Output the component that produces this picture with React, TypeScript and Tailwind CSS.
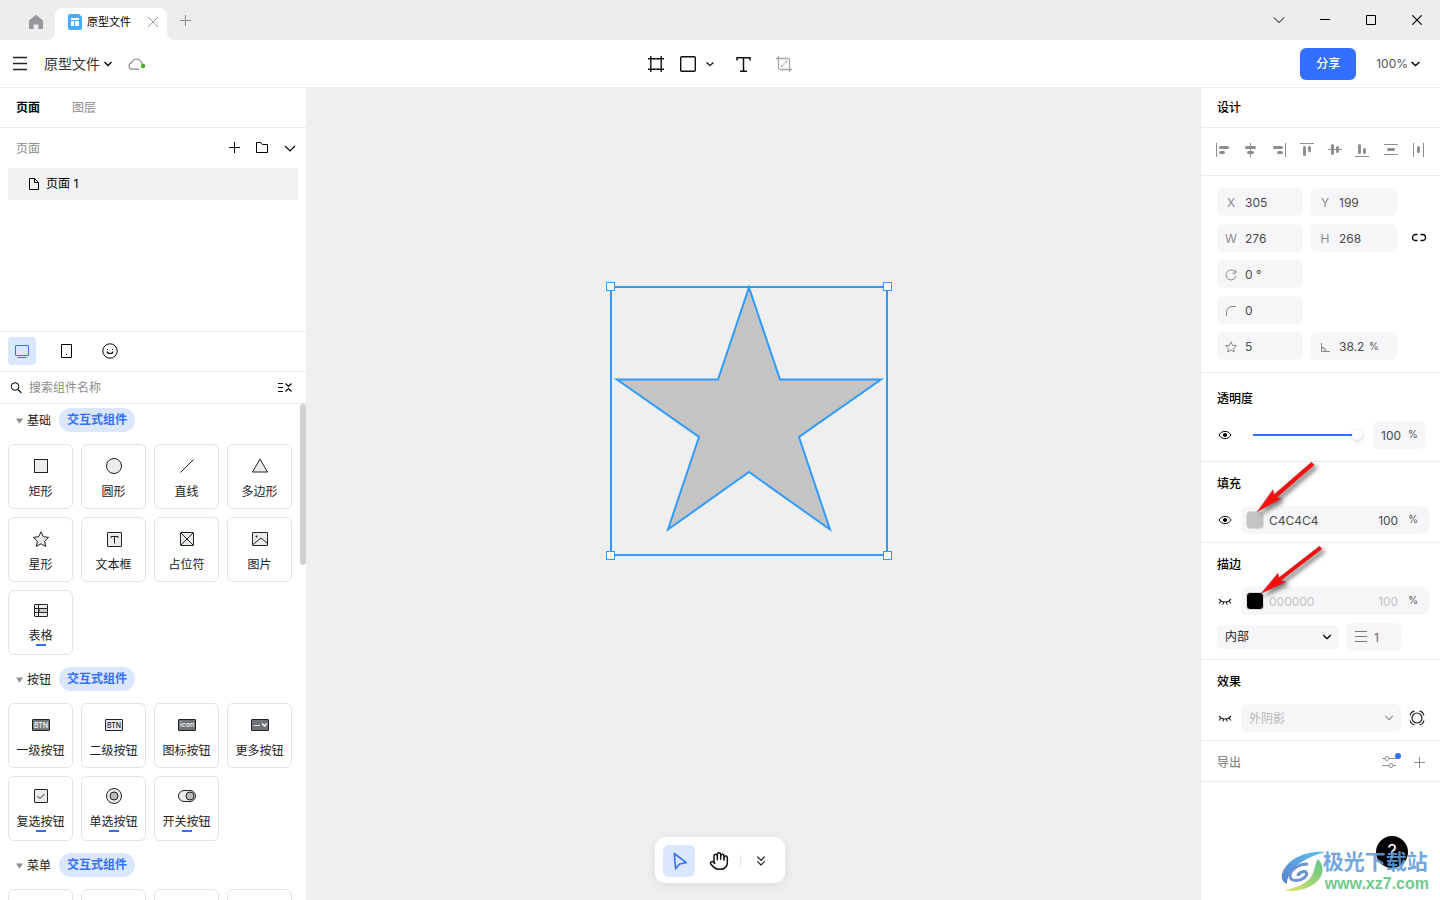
import type { ReactNode } from "react";
import { ChevronDown, ChevronsDown, Hand } from "lucide-react";

interface IconProps {
  w?: number;
  h?: number;
  className?: string;
  children: ReactNode;
}

const Icon = ({ w = 16, h = 16, className = "", children }: IconProps) => (
  <svg
    width={w}
    height={h}
    viewBox={`0 0 ${w} ${h}`}
    fill="none"
    stroke="currentColor"
    className={`shrink-0 ${className}`}
    aria-hidden="true"
  >
    {children}
  </svg>
);

/* ---------- title bar ---------- */

const TitleBar = () => (
  <header className="flex h-10 shrink-0 items-end justify-between bg-[#ecedef]">
    <div className="flex items-end">
      <button aria-label="首页" className="flex h-9 w-[55px] items-center justify-end pr-[11px] text-[#96989b]">
        <Icon>
          <path d="M8 .8 1 6.4V15h4.6v-4.6h4.8V15H15V6.4z" fill="currentColor" stroke="none" />
        </Icon>
      </button>
      <div className="relative flex h-8 w-28 items-center rounded-t-lg bg-white pr-2 pl-3">
        <svg width="8" height="8" className="absolute bottom-0 -left-2 fill-white" aria-hidden="true">
          <path d="M8 0v8H0a8 8 0 0 0 8-8z" />
        </svg>
        <svg width="8" height="8" className="absolute -right-2 bottom-0 fill-white" aria-hidden="true">
          <path d="M0 0v8h8a8 8 0 0 1-8-8z" />
        </svg>
        <svg width="16" height="16" viewBox="0 0 16 16" className="mb-1 shrink-0" aria-hidden="true">
          <path d="M3 0h9l3 3v11a2 2 0 0 1-2 2H3a2 2 0 0 1-2-2V2a2 2 0 0 1 2-2z" fill="#45aeff" />
          <path d="M4 4h8v2H4zM4 7h3v5H4zM8 7h4v5H8z" fill="#fff" />
        </svg>
        <span className="mb-1 ml-1 text-[11px] text-black">原型文件</span>
        <button aria-label="关闭标签" className="mb-1 ml-auto text-[#9a9a9a]">
          <Icon w={12} h={12}>
            <path d="m1 1 10 10M11 1 1 11" />
          </Icon>
        </button>
      </div>
      <button aria-label="新建标签" className="flex h-9 items-center pb-1 pl-3 text-[#8c8c8c]">
        <Icon w={12} h={12}>
          <path d="M6.500 1v11M1 6.500h11" />
        </Icon>
      </button>
    </div>
    <div className="flex h-full text-black">
      <button aria-label="更多" className="flex w-[46px] items-center justify-center">
        <Icon w={12} h={12}>
          <path d="m.8 3.500 5.200 5 5.200-5" />
        </Icon>
      </button>
      <button aria-label="最小化" className="flex w-[46px] items-center justify-center">
        <Icon w={10} h={10}>
          <path d="M0 4.500h10" />
        </Icon>
      </button>
      <button aria-label="最大化" className="flex w-[46px] items-center justify-center">
        <Icon w={10} h={10}>
          <path d="M.5.5h9v9h-9z" />
        </Icon>
      </button>
      <button aria-label="关闭" className="flex w-[46px] items-center justify-center">
        <Icon w={10} h={10}>
          <path d="m.3.3 9.400 9.400M9.700.3.3 9.700" strokeWidth="1.200" />
        </Icon>
      </button>
    </div>
  </header>
);

/* ---------- toolbar ---------- */

const Toolbar = () => (
  <div className="grid h-12 shrink-0 grid-cols-[1fr_auto_1fr] items-center border-b border-[#ededed] bg-white">
    <div className="flex items-center pl-3">
      <button aria-label="菜单" className="text-[#222]">
        <Icon>
          <path d="M1 1.500h14M1 7.500h14M1 13.500h14" strokeWidth="1.400" />
        </Icon>
      </button>
      <button className="ml-4 flex items-center gap-1 text-sm text-[#333]">
        原型文件
        <Icon w={8} h={8} className="text-black">
          <path d="m.5 2 3.500 3.500L7.500 2" strokeWidth="1.300" />
        </Icon>
      </button>
      <button aria-label="已同步" className="ml-4">
        <Icon w={18} h={14} className="text-[#9c9c9c]">
          <path
            d="M11 12.300H4.200A3.400 3.400 0 0 1 3.700 5.600 5.200 5.200 0 0 1 13.500 5.600L14.500 7"
            strokeWidth="1.400"
          />
          <circle cx="15" cy="9" r="2.200" fill="#3fb215" stroke="none" />
        </Icon>
      </button>
    </div>
    <div className="flex w-36 items-center text-[#111]">
      <button aria-label="画板">
        <Icon>
          <path d="M2.800 0v16M13.200 0v16M0 2.800h16M0 13.200h16" strokeWidth="1.400" />
        </Icon>
      </button>
      <button aria-label="矩形" className="ml-4 flex items-center gap-[9px]">
        <Icon>
          <rect x=".7" y=".7" width="14.600" height="14.600" rx="1" strokeWidth="1.400" />
        </Icon>
        <Icon w={10} h={8}>
          <path d="m1.500 2.500 3.500 3 3.500-3" strokeWidth="1.300" />
        </Icon>
      </button>
      <button aria-label="文本" className="ml-5">
        <Icon>
          <path d="M2 4.500V1.700h13v2.800M8.500 1.700v13.500M5 15.200h7" strokeWidth="1.500" />
        </Icon>
      </button>
      <button aria-label="裁剪" className="ml-auto text-[#a6a6a6]">
        <Icon>
          <path d="M2.500 0v12a1.500 1.500 0 0 0 1.500 1.500h12M0 2.500h12A1.500 1.500 0 0 1 13.500 4v12" strokeWidth="1.300" />
          <path d="m5 11 2-2M7.500 8.500l1-1M9 7l2-2" strokeWidth="1.300" />
        </Icon>
      </button>
    </div>
    <div className="flex items-center justify-end gap-5 pr-5">
      <button className="h-8 w-14 rounded-md bg-[#3370ff] text-xs font-medium text-white">分享</button>
      <button className="flex items-center gap-[3px] text-xs text-[#555]">
        100%
        <Icon w={9} h={8} className="text-black">
          <path d="m.5 2 4 3.500 4-3.500" strokeWidth="1.400" />
        </Icon>
      </button>
    </div>
  </div>
);

/* ---------- component library ---------- */

interface Widget {
  name: string;
  icon: ReactNode;
  isNew?: boolean;
}

interface WidgetGroup {
  title: string;
  items: Widget[];
}

const BTN_TEXT = "stroke-none text-[7px] font-medium";

const groups: WidgetGroup[] = [
  {
    title: "基础",
    items: [
      { name: "矩形", icon: <rect x="2.500" y="1.500" width="13" height="13" fill="#ececec" /> },
      { name: "圆形", icon: <circle cx="9" cy="8" r="7.500" fill="#ececec" /> },
      { name: "直线", icon: <path d="M2.500 14.500 15.500 1.500" /> },
      { name: "多边形", icon: <path d="M9 1 16.500 14h-15z" fill="#ececec" /> },
      {
        name: "星形",
        icon: <path d="m9 .8 2.300 4.900 5.300.7-3.900 3.700 1 5.300L9 12.800l-4.700 2.600 1-5.300L1.400 6.400l5.300-.7z" fill="#ececec" />,
      },
      {
        name: "文本框",
        icon: (
          <>
            <rect x="2.500" y="1.500" width="14" height="14" rx=".5" fill="#ececec" />
            <path d="M6 7V5.500h7V7M9.500 5.500v7" />
          </>
        ),
      },
      {
        name: "占位符",
        icon: (
          <>
            <rect x="2.500" y="1.500" width="13" height="13" rx=".5" fill="#ececec" />
            <path d="m3 2 12 12M15 2 3 14" />
          </>
        ),
      },
      {
        name: "图片",
        icon: (
          <>
            <rect x="1.500" y="1.500" width="15" height="13" rx=".5" fill="#ececec" />
            <path d="m2 13.500 8-6.500 6.500 5.500" />
            <circle cx="5.500" cy="5.500" r="1" fill="currentColor" stroke="none" />
          </>
        ),
      },
      {
        name: "表格",
        isNew: true,
        icon: (
          <>
            <rect x="2.500" y="2.500" width="13" height="12" rx=".5" fill="#ececec" />
            <path d="M7 6.500h8.500v4H7z" fill="#ccc" />
            <path d="M2.500 6.500h13M2.500 10.500h13M6.500 2.500v12" />
          </>
        ),
      },
    ],
  },
  {
    title: "按钮",
    items: [
      {
        name: "一级按钮",
        icon: (
          <>
            <rect x=".5" y="2.500" width="17" height="11" rx=".5" fill="#777" />
            <text x="9" y="11" textAnchor="middle" className={`fill-white ${BTN_TEXT}`}>BTN</text>
          </>
        ),
      },
      {
        name: "二级按钮",
        icon: (
          <>
            <rect x=".5" y="2.500" width="17" height="11" rx=".5" fill="#ececec" />
            <text x="9" y="11" textAnchor="middle" className={`fill-[#222] ${BTN_TEXT}`}>BTN</text>
          </>
        ),
      },
      {
        name: "图标按钮",
        icon: (
          <>
            <rect x=".5" y="2.500" width="17" height="11" rx=".5" fill="#6f7378" />
            <text x="9" y="10" textAnchor="middle" className={`fill-white ${BTN_TEXT}`}>icon</text>
          </>
        ),
      },
      {
        name: "更多按钮",
        icon: (
          <>
            <rect x=".5" y="2.500" width="17" height="11" rx=".5" fill="#6f7378" />
            <path d="M2.500 8.500H9" stroke="#ddd" />
            <path d="m11 6.500 2.500 2.500L16 6.500" stroke="#fff" strokeWidth="1.300" />
          </>
        ),
      },
      {
        name: "复选按钮",
        isNew: true,
        icon: (
          <>
            <rect x="2.500" y="1.500" width="13" height="13" rx=".5" fill="#ececec" />
            <path d="m5.500 8 2.500 2.500 4.500-4.500" />
          </>
        ),
      },
      {
        name: "单选按钮",
        isNew: true,
        icon: (
          <>
            <circle cx="9" cy="8" r="7.500" fill="#ececec" />
            <circle cx="9" cy="8" r="4" fill="#bbb" />
          </>
        ),
      },
      {
        name: "开关按钮",
        isNew: true,
        icon: (
          <>
            <rect x=".5" y="2.500" width="17" height="11" rx="5.500" fill="#ececec" />
            <circle cx="12" cy="8" r="4" fill="#bbb" />
          </>
        ),
      },
    ],
  },
  {
    title: "菜单",
    items: [
      { name: "", icon: null },
      { name: "", icon: null },
      { name: "", icon: null },
      { name: "", icon: null },
    ],
  },
];

const WidgetCard = ({ widget }: { widget: Widget }) => (
  <button
    className={`flex h-[65px] flex-col items-center rounded-md border border-[#e3e3e3] bg-white text-xs whitespace-nowrap text-[#222] ${
      widget.isNew ? "pt-[11px]" : "pt-[13px]"
    }`}
  >
    <Icon w={18}>{widget.icon}</Icon>
    <span className="mt-[10px] leading-4">{widget.name}</span>
    {widget.isNew && <span className="h-[2px] w-[10px] bg-[#3370ff]" />}
  </button>
);

const LeftPanel = () => (
  <aside className="flex w-[306px] shrink-0 flex-col bg-white text-xs">
    <div className="flex h-10 shrink-0 items-center gap-8 border-b border-[#ebebeb] px-4">
      <button className="font-bold text-black">页面</button>
      <button className="text-[#8c8c8c]">图层</button>
    </div>
    <div className="flex h-10 shrink-0 items-center justify-between pr-2 pl-4">
      <span className="pt-px text-[#8c8c8c]">页面</span>
      <div className="flex items-center gap-3 text-black">
        <button aria-label="新建页面">
          <Icon>
            <path d="M8.500 2v11M3 7.500h11" />
          </Icon>
        </button>
        <button aria-label="新建文件夹">
          <Icon>
            <path d="M2.500 2.500v10h11v-8h-5l-1.500-2H2.500z" />
          </Icon>
        </button>
        <button aria-label="收起">
          <Icon>
            <path d="m3 6 5 5 5-5" strokeWidth="1.200" />
          </Icon>
        </button>
      </div>
    </div>
    <div className="h-[163px] shrink-0 px-2">
      <button className="flex h-8 w-full items-center gap-1 bg-[#f2f2f2] pl-[18px] text-black">
        <Icon>
          <path d="M3.500 2.500h5l4 4v7h-9zM8.500 2.500v4h4" />
        </Icon>
        页面 1
      </button>
    </div>
    <div className="flex h-[41px] shrink-0 items-start gap-4 border-y border-[#ebebeb] px-2 pt-[5px] text-black">
      <button aria-label="网页组件" className="flex size-7 items-center justify-center rounded bg-[#dbe6ff] text-[#3370ff]">
        <Icon>
          <rect x="1.500" y="2.500" width="13" height="10" rx=".5" />
          <path d="M3.500 14.500h9" />
        </Icon>
      </button>
      <button aria-label="移动组件" className="flex size-7 items-center justify-center">
        <Icon>
          <path d="M3.500 1.500h10v13h-10z" />
          <path d="M8 11.500h1" />
        </Icon>
      </button>
      <button aria-label="图标组件" className="flex size-7 items-center justify-center">
        <Icon>
          <circle cx="8" cy="8" r="7.200" />
          <path d="M5 6.500h1M10 6.500h1M5.200 8.500a2.800 2 0 0 0 5.600 0" strokeWidth="1.200" />
        </Icon>
      </button>
    </div>
    <div className="flex h-8 shrink-0 items-center border-b border-[#ebebeb] pr-3 pl-2">
      <Icon className="text-black">
        <circle cx="7" cy="6.500" r="3.800" />
        <path d="m10 9.500 3.300 3.300" strokeWidth="1.200" />
      </Icon>
      <input
        aria-label="搜索组件名称"
        placeholder="搜索组件名称"
        className="ml-[5px] min-w-0 flex-1 outline-none placeholder:text-[#8c8c8c]"
      />
      <button aria-label="全部收起" className="text-black">
        <Icon>
          <path d="M0 3.500h5M0 7.500h5M0 11.500h5" />
          <path d="m7.500 3.500 3 3 3-3M7.500 11.500l3-3 3 3" strokeWidth="1.200" />
        </Icon>
      </button>
    </div>
    <div className="relative min-h-0 flex-1 overflow-hidden pt-1 pr-[14px] pl-2">
      {groups.map((group) => (
        <section key={group.title} className="mb-3">
          <div className="mb-3 flex items-center gap-2">
            <button className="flex items-center gap-1 pt-[2px] pl-2 text-[#222]">
              <svg width="7" height="6" className="fill-[#8c8c8c]" aria-hidden="true">
                <path d="M0 .5h7L3.500 5.500z" />
              </svg>
              {group.title}
            </button>
            <span className="flex h-6 items-center rounded-full bg-[#dbe6ff] px-2 font-bold text-[#3370ff]">
              交互式组件
            </span>
          </div>
          <div className="grid grid-cols-4 gap-2">
            {group.items.map((widget, i) => (
              <WidgetCard key={i} widget={widget} />
            ))}
          </div>
        </section>
      ))}
      <span className="absolute top-0 right-0 h-[161px] w-[6px] rounded-full bg-[#d0d1d4]" />
    </div>
  </aside>
);

/* ---------- canvas ---------- */

const handles = [
  [1, 1],
  [278, 1],
  [1, 270],
  [278, 270],
];

const Canvas = () => (
  <main className="relative min-w-0 flex-1 bg-[#efefef]">
    <svg width="288" height="280" className="absolute top-[193px] left-[299px]" aria-label="星形">
      <path
        d="m144 6.500 31 92h101l-82 57.500 31 92.500-81-57.500-81 57.500 31-92.500L12 98.500h101z"
        fill="#c4c4c4"
        stroke="#2f9bff"
        strokeWidth="2"
      />
      <rect x="6" y="6" width="276" height="268" fill="none" stroke="#2f9bff" strokeWidth="2" />
      {handles.map(([x, y]) => (
        <rect key={`${x}-${y}`} x={x + 0.5} y={y + 0.5} width="8" height="8" fill="#fff" stroke="#2f9bff" />
      ))}
    </svg>
  </main>
);

const BottomBar = () => (
  <div className="absolute bottom-[17px] left-1/2 flex h-[46px] w-[130px] -translate-x-1/2 items-center rounded-[10px] bg-white px-2 pt-[2px] shadow-[0_2px_12px_rgba(0,0,0,0.08)]">
    <button aria-label="选择" className="flex size-8 items-center justify-center rounded-md bg-[#dbe6ff] text-[#3370ff]">
      <Icon w={18} h={18}>
        <path
          d="M4.300 1.500 16.200 10.700 9.600 12 5.600 16.800z"
          strokeWidth="1.600"
          strokeLinejoin="round"
        />
      </Icon>
    </button>
    <button aria-label="移动画布" className="ml-[14px] text-[#111]">
      <Hand size={20} strokeWidth={1.8} />
    </button>
    <span className="ml-[11px] h-3 w-px bg-[#e8e8e8]" />
    <button aria-label="展开" className="ml-3 text-[#222]">
      <ChevronsDown size={16} strokeWidth={1.8} />
    </button>
  </div>
);

/* ---------- design panel ---------- */

const alignIcons = [
  { label: "左对齐", lines: "M2.500 1v14", bars: "M6.500 5.500h7M6.500 10.500h3" },
  { label: "水平居中", lines: "M8.500 1v14", bars: "M4.500 5.500h8M6.500 10.500h4" },
  { label: "右对齐", lines: "M15.500 1v14", bars: "M4.500 5.500h7M8.500 10.500h3" },
  { label: "顶对齐", lines: "M2 1.500h14", bars: "M6.500 5.500v7M11.500 5.500v3" },
  { label: "垂直居中", lines: "M1 7.500h14", bars: "M5.500 3.500v8M10.500 5.500v4" },
  { label: "底对齐", lines: "M0 14.500h14", bars: "M4.500 3.500v7M9.500 7.500v3" },
  { label: "垂直分布", lines: "M1 2.500h14M1 12.500h14", bars: "M5.500 7.500h5" },
  { label: "水平分布", lines: "M2.500 1v14M12.500 1v14", bars: "M7.500 5.500v4" },
];

interface FieldProps {
  label: string;
  value: string;
  icon: ReactNode;
  unit?: string;
}

const Field = ({ label, value, icon, unit }: FieldProps) => (
  <label className="flex h-7 w-[86px] items-center rounded-md bg-[#f6f6f8] px-2 pt-px text-[#8c8c8c]">
    <span className="flex w-3 shrink-0 justify-center">{icon}</span>
    <input
      aria-label={label}
      defaultValue={value}
      className={`ml-2 min-w-0 pt-px text-[#4a4a4a] outline-none ${unit ? "w-[27px]" : "w-full"}`}
    />
    {unit && <span className="ml-[3px] text-[10px] text-[#555]">{unit}</span>}
  </label>
);

const Eye = () => (
  <button aria-label="显示" className="text-black">
    <Icon>
      <path d="M2 8c1.600-2.600 3.600-3.600 6-3.600S12.400 5.400 14 8c-1.600 2.600-3.600 3.600-6 3.600S3.600 10.600 2 8z" />
      <circle cx="8" cy="8" r="2.100" fill="currentColor" stroke="none" />
    </Icon>
  </button>
);

const EyeClosed = () => (
  <button aria-label="隐藏" className="text-[#222]">
    <Icon>
      <path d="M2 6c1.500 2.200 3.500 3 6 3s4.500-.8 6-3M4 8l-2 2.500M6.500 9 6 11.500M9.500 9l.5 2.500M12 8l2 2.500" strokeWidth="1.200" />
    </Icon>
  </button>
);

interface PaintProps {
  name: string;
  hex: string;
  hidden?: boolean;
}

const Paint = ({ name, hex, hidden }: PaintProps) => (
  <div className="flex items-center gap-2">
    {hidden ? <EyeClosed /> : <Eye />}
    <div className="flex h-7 min-w-0 flex-1 items-center rounded-md bg-[#f6f6f8] px-[5px]">
      <button
        aria-label={`${name}颜色`}
        className="size-[18px] shrink-0 rounded-sm border border-[#dcdcdc]"
        style={{ backgroundColor: `#${hex}` }}
      />
      <input
        aria-label={`${name}色值`}
        defaultValue={hex}
        className={`ml-[5px] min-w-0 flex-1 pt-px outline-none ${hidden ? "text-[#c2c2c2]" : "text-[#4a4a4a]"}`}
      />
      <input
        aria-label={`${name}不透明度`}
        defaultValue="100"
        className={`w-[30px] pt-px outline-none ${hidden ? "text-[#c2c2c2]" : "text-[#4a4a4a]"}`}
      />
      <span className="mr-[6px] text-[10px] text-[#555]">%</span>
    </div>
  </div>
);

const RightPanel = () => (
  <aside className="flex w-60 shrink-0 flex-col border-l border-[#ededed] bg-white text-xs text-black">
    <h2 className="flex h-10 shrink-0 items-center border-b border-[#ebebeb] px-4 font-medium">设计</h2>
    <div className="flex h-12 shrink-0 items-start justify-between border-b border-[#ebebeb] px-[13px] pt-[14px] text-[#8c8e92]">
      {alignIcons.map((icon) => (
        <button key={icon.label} aria-label={icon.label}>
          <Icon>
            <path d={icon.lines} />
            <path d={icon.bars} strokeWidth="3" strokeLinecap="round" />
          </Icon>
        </button>
      ))}
    </div>

    <section className="flex items-center gap-[14px] border-b border-[#ebebeb] py-3 pr-3 pl-4">
      <div className="grid grid-cols-[86px_86px] gap-2">
        <Field label="X" value="305" icon="X" />
        <Field label="Y" value="199" icon="Y" />
        <Field label="W" value="276" icon="W" />
        <Field label="H" value="268" icon="H" />
        <div className="col-span-2">
          <Field
            label="旋转"
            value="0 °"
            icon={
              <Icon w={12} h={12}>
                <path d="M10.500 3.500A5 5 0 1 0 11 7M10.800.8v3.400H7.500" />
              </Icon>
            }
          />
        </div>
        <div className="col-span-2">
          <Field
            label="圆角"
            value="0"
            icon={
              <Icon w={12} h={12}>
                <path d="M1.500 11V7a5.500 5.500 0 0 1 5.500-5.500h4" />
              </Icon>
            }
          />
        </div>
        <Field
          label="角数"
          value="5"
          icon={
            <Icon w={12} h={12}>
              <path d="m6 .8 1.600 3.500 3.800.4-2.900 2.500.9 3.800L6 9l-3.400 2 .9-3.800L.6 4.700l3.800-.4z" />
            </Icon>
          }
        />
        <Field
          label="比例"
          value="38.2"
          unit="%"
          icon={
            <Icon w={12} h={12}>
              <path d="M2.500 2v8.500H11M2.500 6A4.500 4.500 0 0 1 7 10.500M2.500 6l4 4" />
            </Icon>
          }
        />
      </div>
      <button aria-label="锁定比例" className="mb-[73px]">
        <Icon h={10}>
          <path d="M6.500 1.500h-2a3 3 0 0 0-3 3v1a3 3 0 0 0 3 2h2M9.500 1.500h2a3 3 0 0 1 3 3v1a3 3 0 0 1-3 2h-2" strokeWidth="1.300" />
        </Icon>
      </button>
    </section>

    <section className="border-b border-[#ebebeb] pt-[14px] pr-[15px] pb-3 pl-4">
      <h3 className="mb-[10px] leading-6 font-medium">透明度</h3>
      <div className="flex items-center">
        <Eye />
        <input
          type="range"
          aria-label="透明度"
          defaultValue={100}
          className="ml-5 h-[2px] min-w-0 flex-1 appearance-none bg-[#3370ff] [&::-webkit-slider-thumb]:size-[10px] [&::-webkit-slider-thumb]:appearance-none [&::-webkit-slider-thumb]:rounded-full [&::-webkit-slider-thumb]:bg-white [&::-webkit-slider-thumb]:shadow-[0_1px_4px_rgba(0,0,0,0.2)]"
        />
        <div className="ml-[11px] flex h-7 w-[52px] items-center rounded-md bg-[#f6f6f8] pl-2">
          <input
            aria-label="透明度数值"
            defaultValue="100"
            className="w-[27px] pt-px text-[#4a4a4a] outline-none"
          />
          <span className="text-[10px] text-[#555]">%</span>
        </div>
      </div>
    </section>

    <section className="border-b border-[#ebebeb] pt-3 pr-[11px] pb-2 pl-4">
      <h3 className="mb-3 leading-5 font-medium">填充</h3>
      <Paint name="填充" hex="C4C4C4" />
    </section>

    <section className="border-b border-[#ebebeb] pt-3 pr-[11px] pb-2 pl-4">
      <h3 className="mb-3 leading-5 font-medium">描边</h3>
      <Paint name="描边" hex="000000" hidden />
      <div className="mt-2 flex items-center gap-2">
        <div className="relative">
          <select aria-label="描边位置" className="h-6 w-[122px] appearance-none rounded-md bg-[#f6f6f8] px-2 text-[#222]">
            <option>内部</option>
          </select>
          <ChevronDown size={14} className="pointer-events-none absolute top-[5px] right-[5px]" />
        </div>
        <label className="flex h-7 w-[54px] items-center rounded-md bg-[#f6f6f8] px-2 text-[#777]">
          <Icon w={12} h={12}>
            <path d="M0 .5h12M0 5.500h12M0 10.500h12" />
          </Icon>
          <input
            aria-label="描边粗细"
            defaultValue="1"
            className="ml-[7px] w-5 pt-px text-[#666] outline-none"
          />
        </label>
      </div>
    </section>

    <section className="border-b border-[#ebebeb] pt-3 pr-3 pb-2 pl-4">
      <h3 className="mb-3 leading-5 font-medium">效果</h3>
      <div className="flex items-center gap-2">
        <EyeClosed />
        <div className="relative">
          <select aria-label="效果类型" className="h-7 w-40 appearance-none rounded-md bg-[#f6f6f8] px-2 pt-px text-[#b8b8b8]">
            <option>外阴影</option>
          </select>
          <ChevronDown
            size={14}
            className="pointer-events-none absolute top-[7px] right-[5px] text-[#999]"
          />
        </div>
        <button aria-label="效果设置" className="text-[#222]">
          <Icon>
            <circle cx="8" cy="8" r="5" strokeWidth="1.200" />
            <path
              d="M5.500 1.200A5 5 0 0 0 1.200 5.500M10.500 1.200A5 5 0 0 1 14.800 5.500M14.800 10.500A5 5 0 0 1 10.500 14.800M5.500 14.800A5 5 0 0 1 1.200 10.500"
              strokeWidth="1.200"
            />
          </Icon>
        </button>
      </div>
    </section>

    <section className="flex h-[41px] shrink-0 items-center justify-between border-b border-[#ebebeb] pt-[2px] pr-[13px] pl-4 text-[#8c8c8c]">
      <h3 className="pt-px font-medium">导出</h3>
      <div className="flex items-center gap-[14px]">
        <button aria-label="导出设置" className="relative">
          <Icon>
            <path d="M1 4.500h3M8 4.500h7M1 11.500h7M12 11.500h3" />
            <circle cx="6" cy="4.500" r="2" />
            <circle cx="10" cy="11.500" r="2" />
          </Icon>
          <span className="absolute -top-px -right-1 size-[6px] rounded-full bg-[#3370ff]" />
        </button>
        <button aria-label="添加导出">
          <Icon>
            <path d="M8.500 3v11M3 8.500h11" />
          </Icon>
        </button>
      </div>
    </section>
  </aside>
);

/* ---------- overlays ---------- */

const Arrows = () => (
  <svg
    width="90"
    height="150"
    viewBox="1245 455 90 150"
    className="pointer-events-none absolute top-[455px] right-[105px] drop-shadow-[3px_3px_2px_rgba(0,0,0,0.5)]"
    aria-hidden="true"
  >
    <g fill="#ff0d0d" stroke="#8d5050" strokeWidth=".4">
      <path d="M1257 512 1273 489.500 1274 494.500 1311.500 462 1314.300 465 1277 497.500 1281.500 498.500z" />
      <path d="M1261 593.500 1278 573 1279 577.500 1319.500 546 1322 549 1281 580.500 1286 582z" />
    </g>
  </svg>
);

const Watermark = () => (
  <div className="pointer-events-none absolute right-[11px] bottom-[6px] flex items-center font-['Liberation_Sans','Noto_Sans_CJK_SC',sans-serif] whitespace-nowrap">
    <svg width="46" height="42" viewBox="0 0 46 42" aria-hidden="true">
      <defs>
        <linearGradient id="swirlTop" x1="0" y1="1" x2="1" y2="0">
          <stop offset="0" stopColor="#5b7fcd" />
          <stop offset="1" stopColor="#5cc3f2" />
        </linearGradient>
        <linearGradient id="swirlBottom" x1="0" y1="1" x2="1" y2="0">
          <stop offset="0" stopColor="#e3e56a" />
          <stop offset="1" stopColor="#5cc489" />
        </linearGradient>
      </defs>
      <path d="M45 1C24-1 5 9 1 23c-1 5 1 8 5 10 0-2 0-4 1-6C11 14 28 5 45 1z" fill="url(#swirlTop)" />
      <path
        d="M27 13C17 13 9 19 9 25c0 5 8 6 14 2 5-4 2-8-2-6-3 1-4 3-4 4"
        fill="none"
        stroke="#6c93d6"
        strokeWidth="3"
      />
      <path d="M37 8c9 10 4 22-9 28-9 4-18 5-24 3 14-3 25-8 28-17 2-5 2-9 5-14z" fill="url(#swirlBottom)" />
    </svg>
    <div className="-ml-1 flex flex-col">
      <span className="text-[21px] leading-6 font-bold text-[#5f9bdc]/90">极光下载站</span>
      <span className="pl-[2px] text-base leading-5 font-bold text-[#6fca8b]">www.xz7.com</span>
    </div>
  </div>
);

const App = () => (
  <div className="relative flex h-screen flex-col overflow-hidden font-['Inter','Noto_Sans_CJK_SC',sans-serif]">
    <TitleBar />
    <Toolbar />
    <div className="flex min-h-0 flex-1">
      <LeftPanel />
      <Canvas />
      <RightPanel />
    </div>
    <BottomBar />
    <button
      aria-label="帮助"
      className="absolute right-8 bottom-8 flex size-8 items-center justify-center rounded-full bg-black text-lg leading-none text-white"
    >
      ?
    </button>
    <Arrows />
    <Watermark />
  </div>
);

export default App;
